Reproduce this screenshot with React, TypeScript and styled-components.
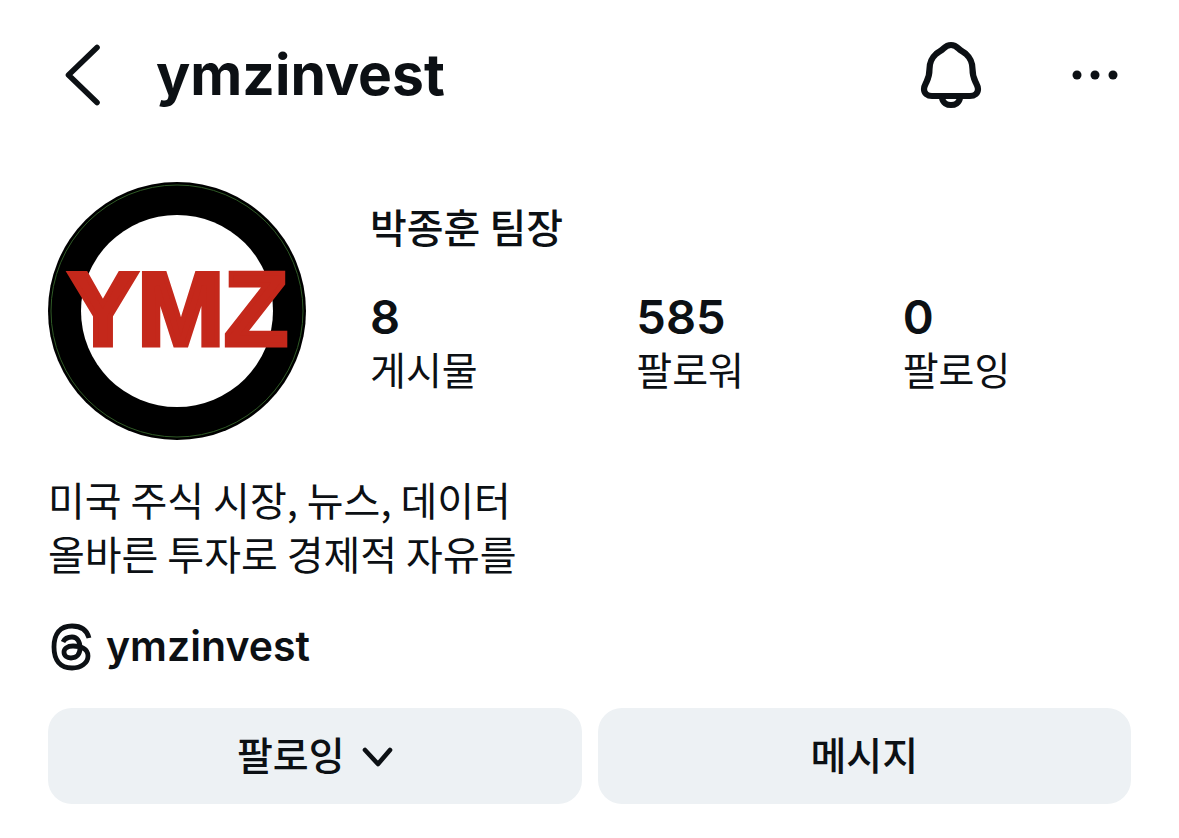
import React from "react";
import styled, { createGlobalStyle } from "styled-components";

const ink = "#0c1014";
const hangul = `"Noto Sans CJK KR", sans-serif`;

const GlobalStyle = createGlobalStyle`
  *, *::before, *::after { box-sizing: border-box; }
  body {
    margin: 0;
    background: #fff;
    color: ${ink};
    font-family: Inter, "Noto Sans CJK KR", sans-serif;
  }
  h1, h2, p, dl, dd { margin: 0; }
`;

const Page = styled.div`
  padding: 32px 48px;
`;

const TopBar = styled.header`
  display: flex;
  align-items: center;
  height: 86px;
  padding: 0 8px 0 12px;
`;

const IconButton = styled.button`
  display: flex;
  padding: 0;
  border: 0;
  background: none;
  color: inherit;
  cursor: pointer;
`;

const Handle = styled.h1`
  flex: 1;
  padding-left: 52px;
  font-size: 57px;
  line-height: 72px;
  font-weight: 700;
`;

const Actions = styled.div`
  display: flex;
  align-items: center;
  gap: 83px;
`;

const Profile = styled.section`
  display: flex;
  gap: 64px;
  margin-top: 64px;
`;

const Avatar = styled.svg`
  flex: none;
  display: block;
`;

const Summary = styled.div`
  flex: 1;
  padding-top: 16px;
`;

const Name = styled.h2`
  font-family: ${hangul};
  font-size: 40px;
  line-height: 56px;
  font-weight: 500;
`;

const Stats = styled.dl`
  display: grid;
  grid-template-columns: 35% 35% 1fr;
  margin-top: 36px;
`;

const Stat = styled.div`
  display: flex;
  flex-direction: column-reverse;
`;

const StatValue = styled.dd`
  font-size: 47px;
  line-height: 54px;
  font-weight: 600;
`;

const StatLabel = styled.dt`
  font-size: 39px;
  line-height: 54px;
`;

const Bio = styled.p`
  margin-top: 32px;
  font-family: ${hangul};
  font-size: 40px;
  line-height: 54px;
`;

const ThreadsLink = styled.a`
  display: inline-flex;
  align-items: center;
  gap: 12px;
  margin-top: 38px;
  color: inherit;
  font-size: 41px;
  line-height: 56px;
  font-weight: 600;
  text-decoration: none;
`;

const ButtonRow = styled.div`
  display: grid;
  grid-template-columns: 1fr 1fr;
  gap: 16px;
  margin-top: 32px;
`;

const PillButton = styled.button`
  display: flex;
  align-items: center;
  justify-content: center;
  gap: 16px;
  height: 96px;
  padding: 0;
  border: 0;
  border-radius: 24px;
  background: #edf1f4;
  color: inherit;
  font-family: inherit;
  font-size: 39px;
  line-height: 54px;
  font-weight: 500;
  cursor: pointer;
`;

const stats = [
  { label: "게시물", value: "8" },
  { label: "팔로워", value: "585" },
  { label: "팔로잉", value: "0" },
];

const stroke = {
  fill: "none",
  stroke: "currentColor",
  strokeLinecap: "round",
  strokeLinejoin: "round",
} as const;

const BackIcon = () => (
  <svg width="44" height="64" viewBox="0 0 44 64" {...stroke} strokeWidth="5.6" aria-hidden="true">
    <path d="M37 4.5 8.5 32 37 59.5" />
  </svg>
);

const BellIcon = () => (
  <svg width="70" height="76" viewBox="0 0 70 76" {...stroke} strokeWidth="6.2" aria-hidden="true">
    <path d="M35 8C31.500 8 29.500 9.500 27.500 11.500C25 14 22 15 20 17C15.500 21 13.500 26 13.500 32C13.500 38 12.500 41 10.500 45C9 48 8 49.500 8 52C8 56.500 11.500 59 16 59H54C58.500 59 62 56.500 62 52C62 49.500 61 48 59.500 45C57.500 41 56.500 38 56.500 32C56.500 26 54.500 21 50 17C48 15 45 14 42.500 11.500C40.500 9.500 38.500 8 35 8Z" />
    <path d="M26 61C27 66 31 68 35 68C39 68 43 66 44 61" />
  </svg>
);

const MoreIcon = () => (
  <svg width="54" height="54" viewBox="0 0 54 54" fill="currentColor" aria-hidden="true">
    <circle cx="8" cy="27" r="4.5" />
    <circle cx="26" cy="27" r="4.5" />
    <circle cx="44" cy="27" r="4.5" />
  </svg>
);

const ThreadsIcon = () => (
  <svg width="46" height="52" viewBox="0 0 46 52" {...stroke} strokeWidth="4.8" strokeLinecap="butt" aria-hidden="true">
    <path d="M41 18C39 10 33 6 24 6C12 6 6 14 6 27C6 40 12 48 24 48C33 48 40 43 40 36C40 29 33 26 25 26C19 26 16 29 16 32C16 36 19 38 23 38C29 38 32 34 32 28C32 21 29 17 24 17C20 17 17 18 15 22" />
  </svg>
);

const ChevronIcon = () => (
  <svg width="32" height="32" viewBox="0 0 32 32" {...stroke} strokeWidth="4.6" aria-hidden="true">
    <path d="M4 10 17 24 29 10" />
  </svg>
);

export default function App() {
  return (
    <>
      <GlobalStyle />
      <Page>
        <TopBar>
          <IconButton type="button" aria-label="뒤로">
            <BackIcon />
          </IconButton>
          <Handle>ymzinvest</Handle>
          <Actions>
            <IconButton type="button" aria-label="알림">
              <BellIcon />
            </IconButton>
            <IconButton type="button" aria-label="더 보기">
              <MoreIcon />
            </IconButton>
          </Actions>
        </TopBar>

        <main>
          <Profile>
            <Avatar width="258" height="258" viewBox="0 0 258 258" role="img" aria-label="YMZ">
              <circle cx="129" cy="129" r="129" fill="#000" />
              <circle cx="129" cy="129" r="126" fill="none" stroke="#2f5a26" strokeWidth="1" />
              <circle cx="129" cy="129" r="96" fill="#fff" />
              <text
                x="130"
                y="163"
                textAnchor="middle"
                fontFamily="Liberation Sans, Arial, sans-serif"
                fontWeight="700"
                fontSize="104"
                fill="#c4281b"
                stroke="#c4281b"
                strokeWidth="5"
              >
                YMZ
              </text>
            </Avatar>
            <Summary>
              <Name>박종훈 팀장</Name>
              <Stats>
                {stats.map((s) => (
                  <Stat key={s.label}>
                    <StatLabel>{s.label}</StatLabel>
                    <StatValue>{s.value}</StatValue>
                  </Stat>
                ))}
              </Stats>
            </Summary>
          </Profile>

          <Bio>
            미국 주식 시장, 뉴스, 데이터
            <br />
            올바른 투자로 경제적 자유를
          </Bio>

          <ThreadsLink href="#threads">
            <ThreadsIcon />
            ymzinvest
          </ThreadsLink>

          <ButtonRow>
            <PillButton type="button">
              팔로잉
              <ChevronIcon />
            </PillButton>
            <PillButton type="button">메시지</PillButton>
          </ButtonRow>
        </main>
      </Page>
    </>
  );
}
